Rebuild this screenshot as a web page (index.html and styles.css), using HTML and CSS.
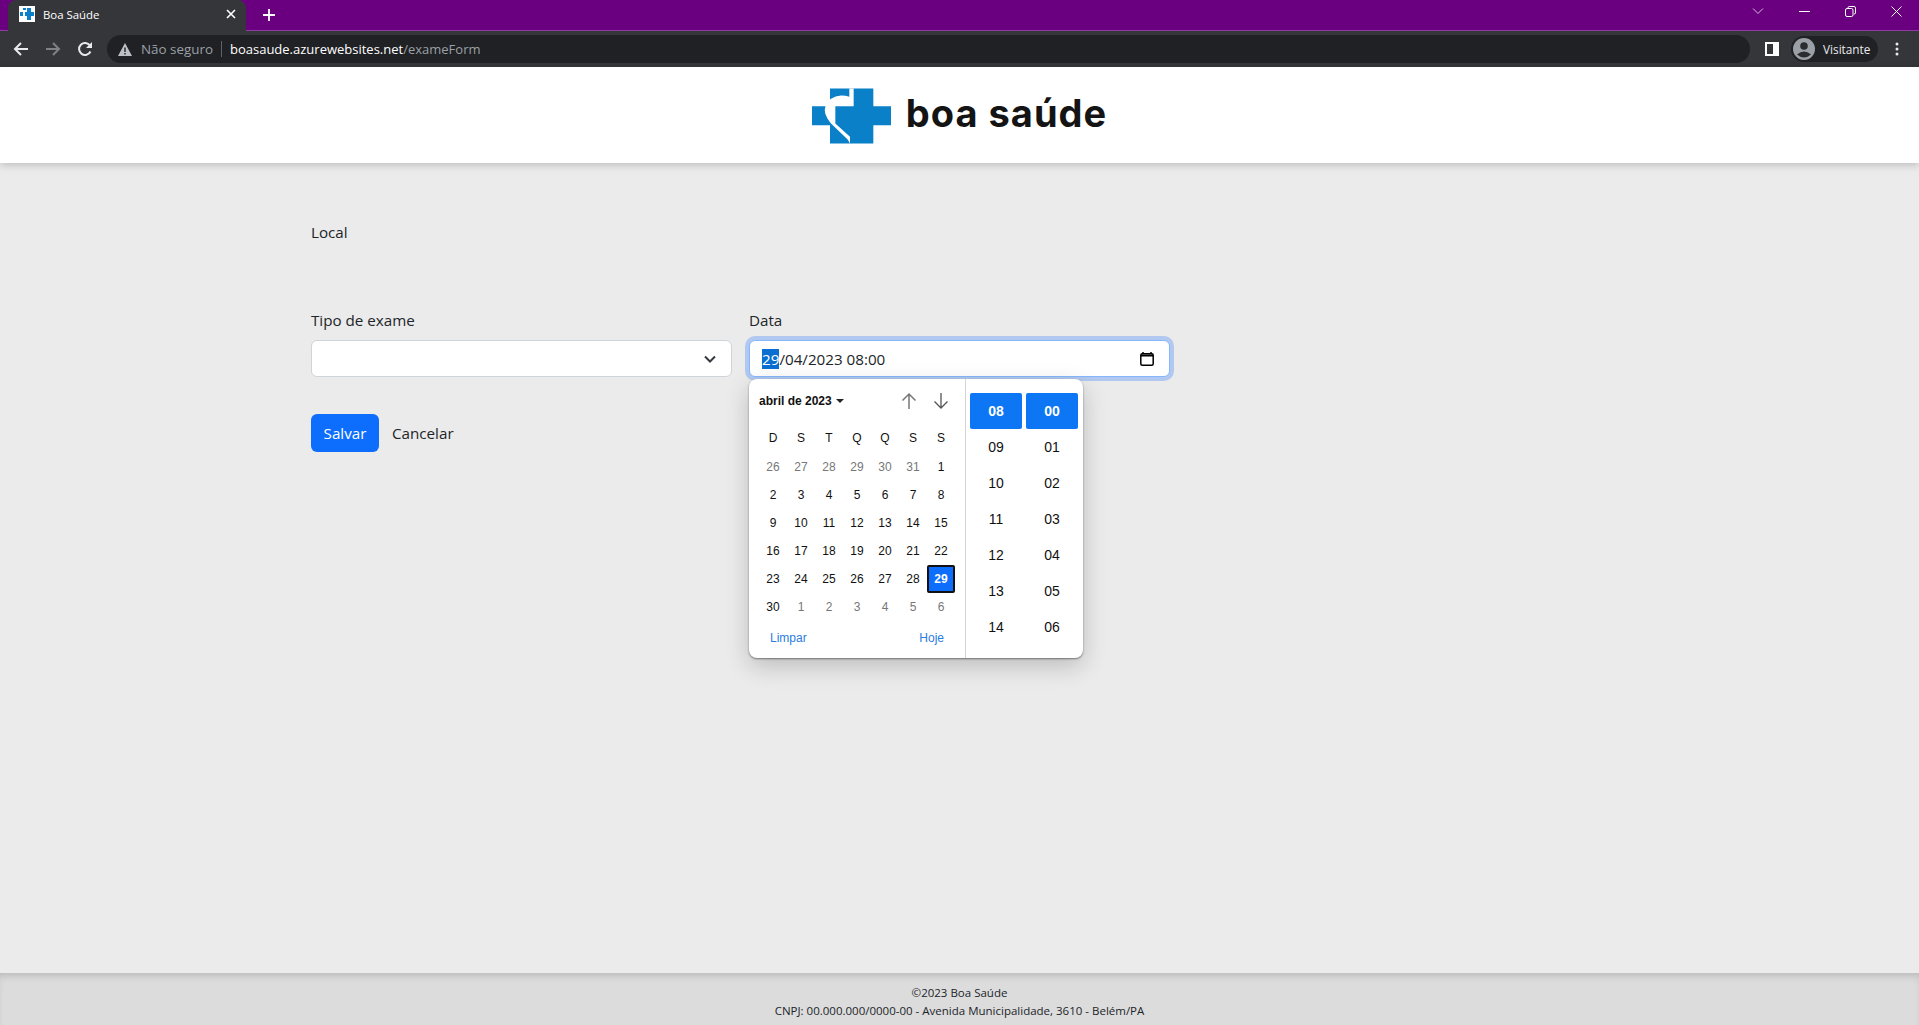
FILE: index.html
```html
<!DOCTYPE html>
<html lang="pt-BR">
<head>
  <meta charset="UTF-8">
  <title>Boa Saúde</title>
  <link rel="stylesheet" href="styles.css">
</head>
<body>
  <div class="browser">
    <div class="tabstrip">
      <div class="tab">
        <span class="favicon">
          <svg width="16" height="16" viewBox="0 0 16 16"><rect width="16" height="16" fill="#fff"/><path d="M1 6h3v4H1zM4 2h3v2H4zM8 2h4v4h3v4h-3v4H8v-4H6V6h2z" fill="#0a80c8"/></svg>
        </span>
        <span class="tab-title">Boa Saúde</span>
        <svg class="tab-close" width="10" height="10" viewBox="0 0 10 10"><path d="M1 1l8 8M9 1l-8 8" stroke="#fff" stroke-width="1.6"/></svg>
      </div>
      <svg class="new-tab" width="12" height="12" viewBox="0 0 12 12"><path d="M6 0v12M0 6h12" stroke="#fff" stroke-width="1.8"/></svg>
      <div class="window-controls">
        <svg width="12" height="12" viewBox="0 0 12 12"><path d="M1 3.500l5 5 5-5" fill="none" stroke="#d9b8e0" stroke-width="1"/></svg>
        <svg width="11" height="11" viewBox="0 0 11 11"><path d="M0 5.500h11" stroke="#fff" stroke-width="1"/></svg>
        <svg width="11" height="11" viewBox="0 0 11 11"><rect x=".5" y="2.500" width="7.500" height="8" rx="1.500" fill="none" stroke="#fff"/><path d="M3 2.500V1.800Q3 .5 4.300 .5H9Q10.500 .5 10.500 2V7Q10.500 8 9 8" fill="none" stroke="#fff"/></svg>
        <svg width="11" height="11" viewBox="0 0 11 11"><path d="M.5 .5l10 10M10.500 .5l-10 10" stroke="#fff" stroke-width="1"/></svg>
      </div>
    </div>
    <div class="toolbar">
      <svg class="nav-icon" width="16" height="16" viewBox="0 0 16 16"><path d="M15 8H2M8 2L2 8l6 6" fill="none" stroke="#e8eaed" stroke-width="2"/></svg>
      <svg class="nav-icon" width="16" height="16" viewBox="0 0 16 16"><path d="M1 8h13M8 2l6 6-6 6" fill="none" stroke="#7f8184" stroke-width="2"/></svg>
      <svg class="nav-icon" width="16" height="16" viewBox="0 0 16 16"><path d="M13.500 10.500A6 6 0 1 1 13 4.500" fill="none" stroke="#e8eaed" stroke-width="2"/><path d="M15 1v6H9z" fill="#e8eaed"/></svg>
      <div class="omnibox">
        <svg width="14" height="13" viewBox="0 0 14 13"><path d="M7 0l7 13H0z" fill="#bdc1c6"/><path d="M6.300 4.500h1.400v4.500H6.300zM6.300 10h1.400v1.500H6.300z" fill="#202124"/></svg>
        <span class="not-secure">Não seguro</span>
        <span class="omni-sep"></span>
        <span class="url">boasaude.azurewebsites.net<span class="url-path">/exameForm</span></span>
      </div>
      <svg class="side-panel" width="14" height="14" viewBox="0 0 14 14"><rect width="14" height="14" fill="#fff"/><rect x="2" y="2" width="6" height="10" fill="#35363a"/></svg>
      <div class="profile">
        <svg width="22" height="22" viewBox="0 0 22 22"><circle cx="11" cy="11" r="11" fill="#9aa0a6"/><circle cx="11" cy="8" r="3.800" fill="#2b2c2f"/><path d="M4 16.500Q11 10.500 18 16.500Q11 22.500 4 16.500z" fill="#2b2c2f"/></svg>
        <span>Visitante</span>
      </div>
      <svg class="menu-dots" width="4" height="14" viewBox="0 0 4 14"><circle cx="2" cy="2" r="1.500" fill="#e8eaed"/><circle cx="2" cy="7" r="1.500" fill="#e8eaed"/><circle cx="2" cy="12" r="1.500" fill="#e8eaed"/></svg>
    </div>
  </div>

  <header class="site-header">
    <svg class="logo-mark" width="79" height="56" viewBox="38 25 237 165">
      <path d="M38 78H92V25H222V78H275V135H222V190H92V135H38z" fill="#0a80c8"/>
      <path d="M150 25H163V78H108V130L152 170V190L145 178L95 130Q70 100 78 80Q90 48 125 46Q140 46 150 50z" fill="#fff"/>
    </svg>
    <span class="logo-text">boa saúde</span>
  </header>

  <main class="page">
    <div class="local-label">Local</div>
    <div class="form-row">
      <div class="field">
        <label class="field-label">Tipo de exame</label>
        <div class="select-box">
          <svg width="16" height="16" viewBox="0 0 16 16"><path d="M3 5.500l5 5 5-5" fill="none" stroke="#343a40" stroke-width="2"/></svg>
        </div>
      </div>
      <div class="field field-date">
        <label class="field-label">Data</label>
        <div class="date-box">
          <span><span class="selected">29</span>/04/2023 08:00</span>
          <svg width="14" height="14" viewBox="0 0 14 14"><path d="M3 0v2M11 0v2" stroke="#000" stroke-width="1.500"/><rect x=".8" y="1.800" width="12.400" height="11.400" rx="1.500" fill="none" stroke="#000" stroke-width="1.500"/><path d="M1 2.500h12v2H1z" fill="#000"/></svg>
        </div>
        <div class="picker">
          <div class="cal">
            <div class="cal-head">
              <span class="cal-month">abril de 2023 <i class="caret"></i></span>
              <span class="cal-arrows">
                <svg width="16" height="18" viewBox="0 0 16 18"><path d="M8 17V2M1.500 8.500L8 2l6.500 6.500" fill="none" stroke="#777" stroke-width="1.500"/></svg>
                <svg width="16" height="18" viewBox="0 0 16 18"><path d="M8 1v15M1.500 9.500L8 16l6.500-6.500" fill="none" stroke="#555" stroke-width="1.300"/></svg>
              </span>
            </div>
            <div class="cal-grid">
              <span class="wd">D</span><span class="wd">S</span><span class="wd">T</span><span class="wd">Q</span><span class="wd">Q</span><span class="wd">S</span><span class="wd">S</span>
              <span class="off">26</span><span class="off">27</span><span class="off">28</span><span class="off">29</span><span class="off">30</span><span class="off">31</span><span>1</span>
              <span>2</span><span>3</span><span>4</span><span>5</span><span>6</span><span>7</span><span>8</span>
              <span>9</span><span>10</span><span>11</span><span>12</span><span>13</span><span>14</span><span>15</span>
              <span>16</span><span>17</span><span>18</span><span>19</span><span>20</span><span>21</span><span>22</span>
              <span>23</span><span>24</span><span>25</span><span>26</span><span>27</span><span>28</span><span class="today">29</span>
              <span>30</span><span class="off">1</span><span class="off">2</span><span class="off">3</span><span class="off">4</span><span class="off">5</span><span class="off">6</span>
            </div>
            <div class="cal-foot"><span>Limpar</span><span>Hoje</span></div>
          </div>
          <div class="time">
            <span class="on">08</span><span class="on">00</span>
            <span>09</span><span>01</span>
            <span>10</span><span>02</span>
            <span>11</span><span>03</span>
            <span>12</span><span>04</span>
            <span>13</span><span>05</span>
            <span>14</span><span>06</span>
          </div>
        </div>
      </div>
    </div>
    <div class="actions">
      <button class="btn-save">Salvar</button>
      <a class="btn-cancel">Cancelar</a>
    </div>
  </main>

  <footer class="site-footer">
    <div>©2023 Boa Saúde</div>
    <div>CNPJ: 00.000.000/0000-00 - Avenida Municipalidade, 3610 - Belém/PA</div>
  </footer>
</body>
</html>
```

FILE: styles.css
```css
html, body {
  margin: 0;
  padding: 0;
  height: 100%;
  overflow: hidden;
}
body {
  display: flex;
  flex-direction: column;
  height: 100vh;
  background: #ebebeb;
  color: #212529;
  font-family: 'Open Sans', sans-serif;
  font-size: 15.2px;
}

/* browser frame */
.browser {
  flex: none;
  background: #35363a;
  color: #e8eaed;
}
.tabstrip {
  display: flex;
  align-items: center;
  height: 30px;
  padding-left: 8px;
  background: #6a0080;
  border-bottom: 1px solid #8f3aa3;
}
.tab {
  display: flex;
  align-items: center;
  width: 238px;
  height: 31px;
  box-sizing: border-box;
  padding: 0 10px 3px 11px;
  margin-bottom: -1px;
  background: #35363a;
  border-radius: 8px 8px 0 0;
  color: #fff;
  font-size: 11.4px;
}
.favicon { display: flex; margin-right: 8px; }
.tab-title { flex: 1; }
.new-tab { margin-left: 17px; }
.window-controls {
  display: flex;
  align-items: center;
  gap: 35px;
  margin-left: auto;
  padding-right: 17px;
  margin-top: -8px;
}
.toolbar {
  display: flex;
  align-items: center;
  height: 36px;
  padding-left: 13px;
}
.nav-icon { margin-right: 16px; }
.omnibox {
  display: flex;
  align-items: center;
  width: 1643px;
  height: 28px;
  box-sizing: border-box;
  margin-left: -2px;
  padding-left: 11px;
  background: #202124;
  border-radius: 14px;
  font-size: 13px;
}
.not-secure { margin-left: 9px; color: #9aa0a6; font-size: 13.4px; }
.omni-sep { width: 1px; height: 16px; margin: 0 8px; background: #5f6368; }
.url { color: #fff; }
.url-path { color: #9aa0a6; }
.side-panel { margin-left: 15px; }
.profile {
  display: flex;
  align-items: center;
  gap: 8px;
  height: 26px;
  margin-left: 12px;
  padding: 0 8px 0 2px;
  background: #202124;
  border-radius: 13px;
  font-size: 11.8px;
}
.menu-dots { margin-left: 17px; }

/* site */
.site-header {
  flex: none;
  display: flex;
  align-items: center;
  justify-content: center;
  gap: 15px;
  height: 96px;
  background: #fff;
  box-shadow: 0 2px 8px rgba(0, 0, 0, .2);
  position: relative;
}
.logo-mark { margin-top: 2px; }
.logo-text {
  padding-bottom: 5px;
  font-family: Inter, sans-serif;
  font-weight: 700;
  font-size: 38px;
  letter-spacing: 1px;
  color: #141414;
}
.page {
  flex: 1;
  padding: 58px 0 0 311px;
}
.local-label { height: 89px; line-height: 22px; }
.form-row { display: flex; gap: 17px; }
.field { width: 421px; position: relative; }
.field-label { display: block; height: 30px; line-height: 20px; }
.select-box, .date-box {
  display: flex;
  align-items: center;
  justify-content: space-between;
  height: 37px;
  box-sizing: border-box;
  background: #fff;
  border: 1px solid #ced4da;
  border-radius: 6px;
}
.select-box { padding: 0 13px 0 12px; justify-content: flex-end; }
.date-box {
  padding: 0 15px 0 12px;
  border-color: #86b7fe;
  box-shadow: 0 0 0 4px #b1c9f0;
}
.selected { background: #0a6fd1; color: #fff; }
.picker {
  position: absolute;
  top: 69px;
  left: 0;
  display: flex;
  width: 334px;
  height: 279px;
  background: #fff;
  border-radius: 8px;
  box-shadow: 0 1px 2px rgba(0, 0, 0, .45), 0 8px 24px rgba(0, 0, 0, .2);
  font-family: 'Liberation Sans', sans-serif;
  font-size: 12px;
  color: #111;
}
.cal {
  width: 217px;
  box-sizing: border-box;
  padding-left: 10px;
  border-right: 1px solid #d4d4d4;
}
.cal-head {
  display: flex;
  align-items: center;
  justify-content: space-between;
  height: 46px;
  padding-bottom: 3px;
  box-sizing: border-box;
  margin-right: 16px;
}
.cal-month { font-weight: 700; }
.caret {
  display: inline-block;
  margin: 0 0 2px 1px;
  border: 4px solid transparent;
  border-top-color: #222;
  border-bottom: 0;
}
.cal-arrows { display: flex; gap: 16px; }
.cal-grid {
  display: grid;
  grid-template-columns: repeat(7, 28px);
  grid-auto-rows: 28px;
  align-items: center;
  justify-items: center;
}
.cal-grid .wd { padding-bottom: 2px; }
.cal-grid .off { color: #777; }
.cal-grid .today {
  display: flex;
  align-items: center;
  justify-content: center;
  width: 28px;
  height: 28px;
  box-sizing: border-box;
  background: #0d6efd;
  border: 2px solid #111;
  border-radius: 2px;
  color: #fff;
  font-weight: 700;
}
.cal-foot {
  display: flex;
  justify-content: space-between;
  padding: 10px 21px 0 11px;
  color: #2a7de1;
}
.time {
  display: grid;
  grid-template-columns: 52px 52px;
  grid-auto-rows: 36px;
  column-gap: 4px;
  align-content: start;
  padding: 14px 0 0 4px;
  font-size: 14px;
}
.time span {
  display: flex;
  align-items: center;
  justify-content: center;
}
.time .on {
  background: #0d76f5;
  border-radius: 2px;
  color: #fff;
  font-weight: 700;
}
.actions {
  display: flex;
  align-items: center;
  gap: 13px;
  margin-top: 37px;
}
.btn-save {
  width: 68px;
  height: 38px;
  background: #0d6efd;
  border: none;
  border-radius: 6px;
  color: #fff;
  font-family: inherit;
  font-size: 15.2px;
}
.site-footer {
  flex: none;
  height: 52px;
  box-sizing: border-box;
  padding-top: 11px;
  background: #dcdcdc;
  box-shadow: inset 0 6px 8px -4px rgba(0, 0, 0, .18);
  text-align: center;
  font-size: 11.5px;
  line-height: 18px;
}
```
